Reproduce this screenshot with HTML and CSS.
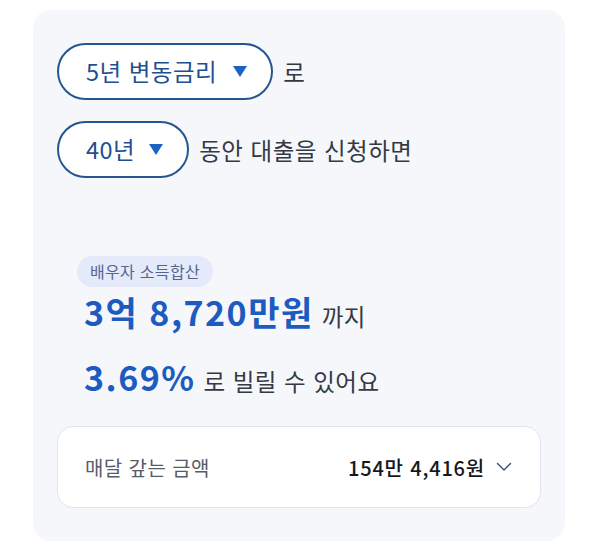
FILE: index.html
```html
<!DOCTYPE html>
<html lang="ko">
<head>
<meta charset="utf-8">
<link rel="stylesheet" href="styles.css">
</head>
<body>
<div class="card">
  <div class="row">
    <button class="pill pill-wide"><span class="pill-text">5년 변동금리</span><span class="tri"></span></button>
    <span class="row-text">로</span>
  </div>
  <div class="row">
    <button class="pill pill-narrow"><span class="pill-text">40년</span><span class="tri"></span></button>
    <span class="row-text">동안 대출을 신청하면</span>
  </div>
  <div class="result">
    <span class="badge">배우자 소득합산</span>
    <div class="line line-amount"><span class="big">3억 8,720만원</span><span class="suffix">까지</span></div>
    <div class="line line-rate"><span class="big">3.69%</span><span class="suffix">로 빌릴 수 있어요</span></div>
  </div>
  <div class="monthly">
    <span class="monthly-label">매달 갚는 금액</span>
    <span class="monthly-value">154만 4,416원
      <svg class="chev" width="16" height="10" viewBox="0 0 16 10"><path d="M1.5 1.5 L8 8 L14.5 1.5" fill="none" stroke="#3a4a7a" stroke-width="1.4" stroke-linecap="round" stroke-linejoin="round"/></svg>
    </span>
  </div>
</div>
</body>
</html>
```

FILE: styles.css
```css
* { box-sizing: border-box; }
html, body { margin: 0; padding: 0; background: #ffffff; }
body {
  font-family: "Noto Sans CJK KR", "Noto Sans", sans-serif;
  color: #333b45;
  width: 600px;
  height: 559px;
  overflow: hidden;
}
.card {
  margin: 10px 35px 0 33px;
  height: 531px;
  background: #f6f7fb;
  border-radius: 18px;
  padding: 33px 24px 0 24px;
  display: flex;
  flex-direction: column;
}
.row {
  display: flex;
  align-items: center;
  height: 57px;
  margin-bottom: 21px;
}
.pill {
  height: 57px;
  border: 2px solid #24568f;
  border-radius: 29px;
  background: #ffffff;
  display: flex;
  align-items: center;
  padding: 0 24px 0 27px;
  font-family: inherit;
  cursor: pointer;
}
.pill-text {
  font-size: 23.5px;
  color: #1f4f8f;
  letter-spacing: 0.5px;
  line-height: 1;
}
.pill-wide .tri { margin-left: 16px; }
.pill-narrow .tri { margin-left: 14px; }
.tri {
  width: 0;
  height: 0;
  border-left: 7.5px solid transparent;
  border-right: 7.5px solid transparent;
  border-top: 11px solid #1b63c2;
}
.row-text {
  margin-left: 10px;
  font-size: 23.5px;
  color: #343a44;
  letter-spacing: 0.5px;
}
.result {
  margin-top: 57px;
  padding-left: 20px;
  display: flex;
  flex-direction: column;
  align-items: flex-start;
}
.badge {
  height: 31px;
  line-height: 31px;
  padding: 0 13px;
  border-radius: 16px;
  background: #e4eaf9;
  color: #56648e;
  font-size: 16px;
  letter-spacing: 0.3px;
}
.line {
  display: flex;
  align-items: baseline;
  margin-left: 7px;
  height: 44px;
  line-height: 44px;
}
.line-amount { margin-top: 3px; }
.line-rate { margin-top: 21px; }
.big {
  font-size: 34px;
  font-weight: 700;
  color: #1c5bbf;
  letter-spacing: 1.5px;
}
.suffix {
  margin-left: 8px;
  font-size: 23.5px;
  color: #343a44;
  letter-spacing: 0.5px;
}
.monthly {
  margin-top: 27px;
  height: 82px;
  background: #ffffff;
  border: 1px solid #e1e4eb;
  border-radius: 16px;
  display: flex;
  align-items: center;
  justify-content: space-between;
  padding: 0 28px 0 27px;
}
.monthly-label {
  font-size: 20px;
  color: #565d68;
  letter-spacing: 0.4px;
}
.monthly-value {
  display: flex;
  align-items: center;
  font-size: 20px;
  font-weight: 500;
  color: #15181d;
  letter-spacing: 0.8px;
}
.chev { margin-left: 11px; }
```
